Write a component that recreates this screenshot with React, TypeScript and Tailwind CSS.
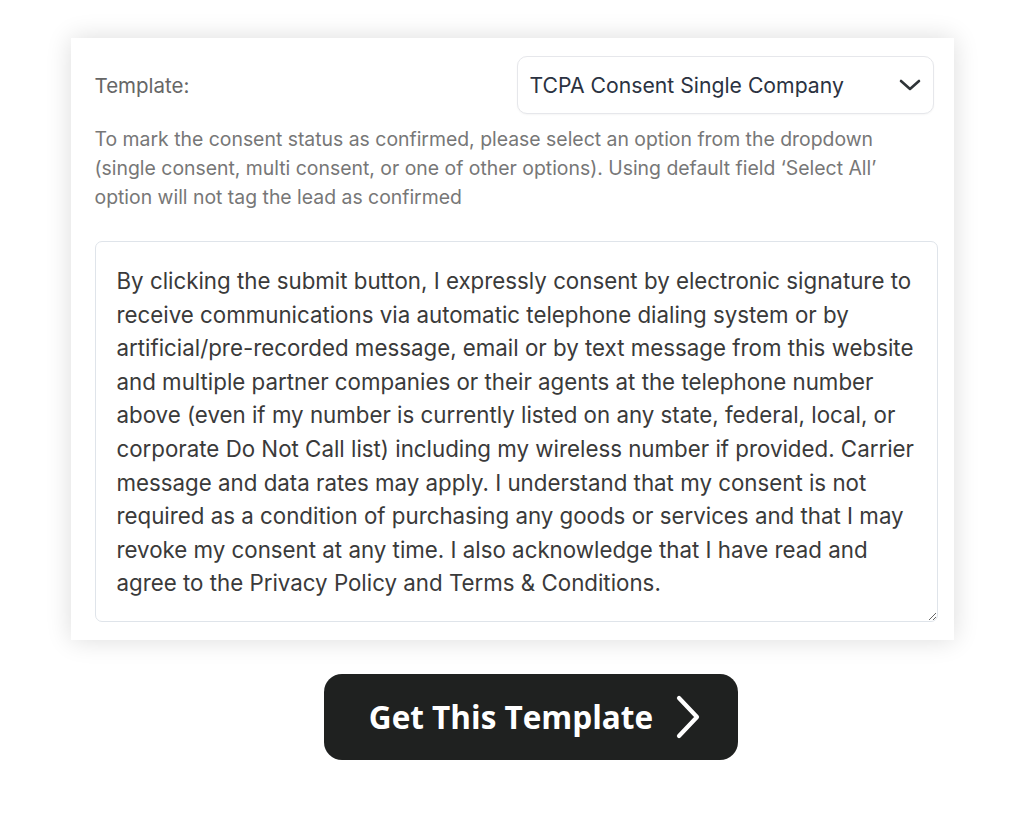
import React from 'react';

const consentText = [
  'By clicking the submit button, I expressly consent by electronic signature to',
  'receive communications via automatic telephone dialing system or by',
  'artificial/pre-recorded message, email or by text message from this website',
  'and multiple partner companies or their agents at the telephone number',
  'above (even if my number is currently listed on any state, federal, local, or',
  'corporate Do Not Call list) including my wireless number if provided. Carrier',
  'message and data rates may apply. I understand that my consent is not',
  'required as a condition of purchasing any goods or services and that I may',
  'revoke my consent at any time. I also acknowledge that I have read and',
  'agree to the Privacy Policy and Terms & Conditions.',
].join('\n');

export default function App() {
  return (
    <div className="min-h-[819px] bg-white pt-[38px] font-['Inter',sans-serif]">
      {/* Template card */}
      <div className="mx-auto w-[883px] bg-white pl-6 pr-4 pt-[18px] pb-[18px] shadow-[0_0_24px_rgba(0,0,0,0.14)]">
        <div className="flex items-center justify-between pr-1">
          <label className="pt-[2px] text-[20.5px] text-[#666666]">Template:</label>
          <div className="flex h-[58px] w-[417px] items-center justify-between rounded-[10px] border border-[#e6e7eb] bg-white pl-[12px] pr-[12px] shadow-[0_1px_2px_rgba(0,0,0,0.04)]">
            <span className="pt-[2px] text-[21.2px] text-[#2b3241]">TCPA Consent Single Company</span>
            <svg width="22" height="12" viewBox="0 0 22 12" fill="none">
              <path d="M2 2l9 8 9-8" stroke="#2f3438" strokeWidth="2.6" strokeLinecap="round" strokeLinejoin="round" />
            </svg>
          </div>
        </div>

        <p className="mt-[11px] text-[19.4px] leading-[29px] text-[#777777]">
          To mark the consent status as confirmed, please select an option from the dropdown
          <br />
          (single consent, multi consent, or one of other options). Using default field ‘Select All’
          <br />
          option will not tag the lead as confirmed
        </p>

        <textarea
          readOnly
          wrap="off"
          defaultValue={consentText}
          className="mt-[29px] block h-[381px] w-[843px] overflow-hidden rounded-[7px] border border-[#dfe4ea] bg-white px-[21px] pt-[22px] text-[22.3px] leading-[33.6px] text-[#3a3a3a] outline-none"
        />
      </div>

      {/* CTA */}
      <div className="mt-[34px] flex justify-center pl-[38px]">
        <button className="flex h-[86px] w-[414px] items-center justify-center gap-[22px] rounded-[18px] bg-[#1f2120] pl-[8px] font-['Open_Sans',sans-serif] text-[31.5px] font-bold text-white">
          <span>Get This Template</span>
          <svg width="26" height="44" viewBox="0 0 26 44" fill="none">
            <path d="M4 3l18 19L4 41" stroke="white" strokeWidth="4.2" strokeLinecap="round" strokeLinejoin="round" />
          </svg>
        </button>
      </div>
    </div>
  );
}
